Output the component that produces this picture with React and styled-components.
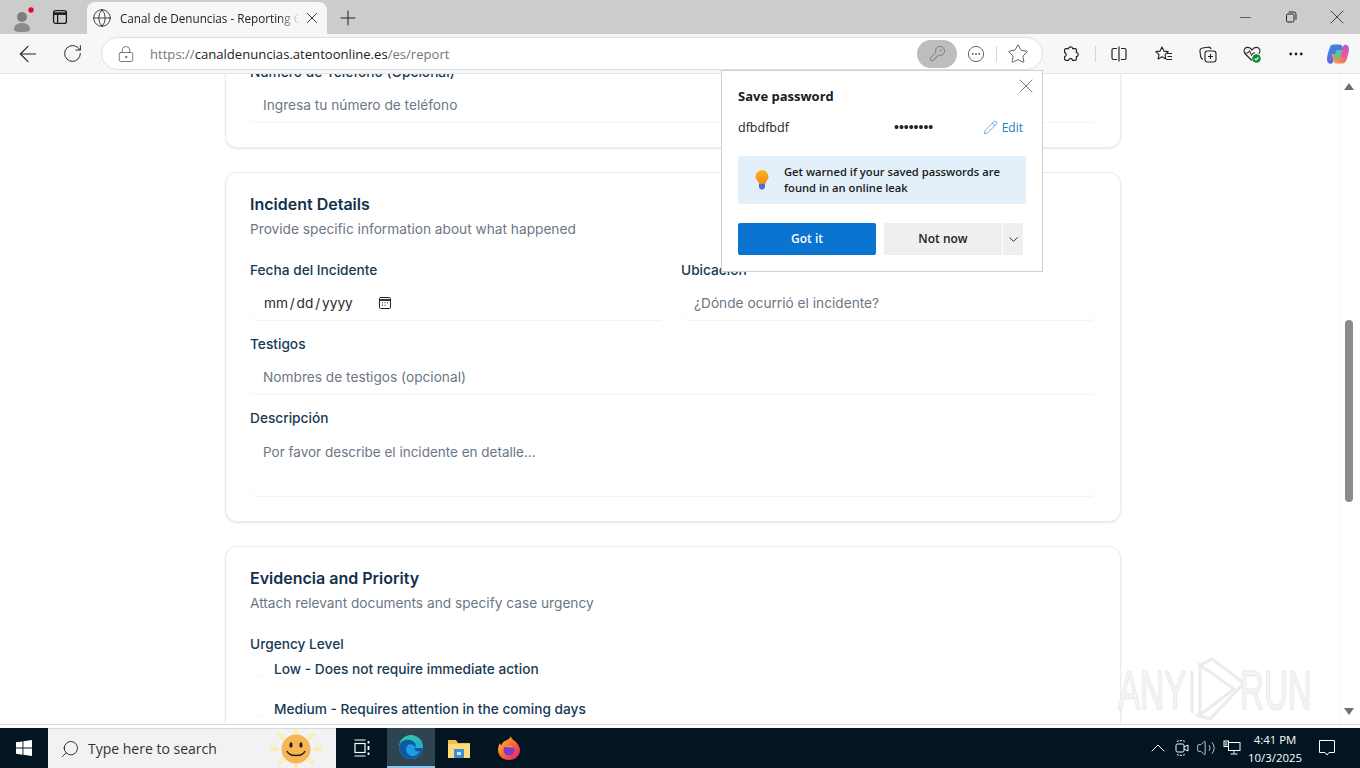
import React from 'react';
import styled, { createGlobalStyle } from 'styled-components';
import {
  ArrowLeft, RotateCw, Plus, X, Minus, Globe, Pencil, Ellipsis, Search, ChevronDown,
  ChevronUp, Star, KeyRound, LockKeyhole, Volume2,
} from 'lucide-react';

const GlobalStyle = createGlobalStyle`
  html, body { margin: 0; padding: 0; height: 100%; overflow: hidden; }
  * { box-sizing: border-box; }
  body { font-family: "Inter", "Liberation Sans", sans-serif; background: #fff; }
`;

const ProfileIcon = () => (
  <svg width="26" height="28" viewBox="0 0 26 28">
    <circle cx="10" cy="13" r="5" fill="#7d7d7d" />
    <path d="M2 26c0-5 3-7 8-7s8 2 8 7c0 1-3 2-8 2s-8-1-8-2z" fill="#8c8c8c" />
    <circle cx="19" cy="6" r="3.4" fill="#d3112b" stroke="#e6e6e6" strokeWidth="1" />
  </svg>
);

const TabsIcon = () => (
  <svg width="16" height="16" viewBox="0 0 16 16" fill="none" stroke="#1a1a1a" strokeWidth="1.3">
    <rect x="1.6" y="1.6" width="12.8" height="12.8" rx="2" />
    <path d="M1.6 4.6h12.8" strokeWidth="2.6" />
    <path d="M5.6 5v9" />
  </svg>
);

const RestoreIcon = () => (
  <svg width="12" height="12" viewBox="0 0 12 12" fill="none" stroke="#222" strokeWidth="1">
    <rect x="1.5" y="3" width="7.5" height="8" rx="1.4" />
    <path d="M3.6 1h5.2A2.2 2.2 0 0 1 11 3.2v5.4" />
  </svg>
);

const ReadIcon = () => (
  <svg width="20" height="20" viewBox="0 0 20 20" fill="none" stroke="#666" strokeWidth="1">
    <circle cx="10" cy="10" r="7.6" />
    <circle cx="6.8" cy="10" r=".9" fill="#555" stroke="none" />
    <circle cx="10" cy="10" r=".9" fill="#555" stroke="none" />
    <circle cx="13.2" cy="10" r=".9" fill="#555" stroke="none" />
  </svg>
);

const ExtensionIcon = () => (
  <svg width="18" height="18" viewBox="0 0 18 18" fill="none" stroke="#222" strokeWidth="1.2" strokeLinejoin="round">
    <path d="M7.5 2.2c1.3-.9 3-.2 3.2 1.5H13c.8 0 1.4.6 1.4 1.4v2.4c1.7.2 2.4 2 1.4 3.3-.4.5-.9.8-1.4.8v2.3c0 .8-.6 1.4-1.4 1.4h-2.5c-.2-1.8-2.5-2.4-3.5-1-.3.3-.4.7-.5 1H4c-.8 0-1.400-.6-1.400-1.400v-2.400c1.700-.3 2.200-2.500.8-3.500-.2-.2-.5-.3-.8-.4V5.100c0-.8.6-1.400 1.400-1.400h2.400c.1-.6.3-1.100.9-1.500z" />
  </svg>
);

const SplitIcon = () => (
  <svg width="18" height="18" viewBox="0 0 18 18" fill="none" stroke="#222" strokeWidth="1.2">
    <path d="M7 3.5H3.5A1.5 1.5 0 0 0 2 5v8a1.5 1.5 0 0 0 1.5 1.5H7M11 3.5h3.5A1.5 1.5 0 0 1 16 5v8a1.5 1.5 0 0 1-1.5 1.5H11M9 1.5v15" />
  </svg>
);

const FavoritesIcon = () => (
  <svg width="20" height="20" viewBox="0 0 20 20" fill="none" stroke="#222" strokeWidth="1.1" strokeLinejoin="round">
    <path d="M8 3l1.9 4.1 4.3.5-3.2 3 .9 4.4L8 12.8 4.1 15l.9-4.4-3.2-3 4.3-.5z" />
    <path d="M13 9.5h5M13.5 12.5h4.5M12.5 15.5h5.5" />
  </svg>
);

const CollectionsIcon = () => (
  <svg width="20" height="20" viewBox="0 0 20 20" fill="none" stroke="#222" strokeWidth="1.1">
    <rect x="7" y="7" width="11" height="11" rx="2.4" />
    <path d="M12.5 10v5M10 12.5h5" />
    <path d="M5 15.5C3.5 15 3 14 2.6 12.5L2 7.5C1.8 5.5 2.8 4.2 4.6 4l5.4-.8c1.5-.2 2.6.4 3.2 1.8" />
  </svg>
);

const HealthIcon = () => (
  <svg width="20" height="20" viewBox="0 0 20 20" fill="none">
    <path d="M10 16.5 3.2 10C1 7.6 2 3.6 5.4 3.4 7.4 3.3 9 4.4 10 6c1-1.6 2.6-2.7 4.6-2.6C18 3.6 19 7.6 16.8 10" stroke="#222" strokeWidth="1.1" />
    <path d="M2.5 9H6l1.5-2.5 2 5L11 9h2" stroke="#222" strokeWidth="1" />
    <circle cx="14.5" cy="14.5" r="4.3" fill="#108a3c" />
    <path d="M12.6 14.6l1.4 1.4 2.5-2.7" stroke="#fff" strokeWidth="1.2" />
  </svg>
);

const CopilotIcon = () => (
  <svg width="24" height="24" viewBox="0 0 24 24">
    <defs>
      <linearGradient id="cpA" x1="0" y1="0" x2="1" y2="1">
        <stop offset="0" stopColor="#2f8fe8" />
        <stop offset="1" stopColor="#7b4fe0" />
      </linearGradient>
      <linearGradient id="cpB" x1="0" y1="1" x2="1" y2="0">
        <stop offset="0" stopColor="#f7b52c" />
        <stop offset=".55" stopColor="#ee5a8e" />
        <stop offset="1" stopColor="#b65ae0" />
      </linearGradient>
    </defs>
    <path d="M7.5 2.5h6c1.5 0 2.5.8 3 2.2L19 12H9.5L7 20c-.4 1.2-1.3 1.8-2.5 1.8C2.5 21.8 1 20 1 17.5c0-3 1.5-9 3-12.5.7-1.7 1.800-2.500 3.500-2.500z" fill="url(#cpA)" />
    <path d="M16.5 21.5h-6c-1.5 0-2.5-.8-3-2.2L5.500 12H15l2-7.500c.4-1.200 1.300-1.800 2.500-1.800 2 0 3.500 1.800 3.500 4.300 0 3-1.500 8.500-3 11.800-.7 1.700-1.800 2.700-3.500 2.700z" fill="url(#cpB)" />
    <path d="M9 12l1.500-4h6L15 12l-1.500 4h-6z" fill="#54c8a0" />
  </svg>
);

const BulbIcon = () => (
  <BulbSvg width="16" height="22" viewBox="0 0 16 22">
    <defs>
      <linearGradient id="bulb" x1="0" y1="0" x2="0" y2="1">
        <stop offset="0" stopColor="#fbb61f" />
        <stop offset="1" stopColor="#f08a1c" />
      </linearGradient>
    </defs>
    <path d="M8 1a6.5 6.5 0 0 1 6.5 6.5c0 2.6-1.6 4-2.5 5.5-.4.7-.5 1.2-.6 2H5c-.1-.8-.3-1.3-.6-2C3.500 11.500 1.500 10.100 1.500 7.500A6.500 6.500 0 0 1 8 1z" fill="url(#bulb)" />
    <path d="M5 15h6v2.500a3 3 0 0 1-6 0z" fill="#4f6bd8" />
  </BulbSvg>
);

const CalendarIcon = () => (
  <svg width="14" height="14" viewBox="0 0 14 14" fill="none" stroke="#222" strokeWidth="1">
    <rect x="1.5" y="1.5" width="11" height="11" rx="1.2" />
    <path d="M1.5 4h11" strokeWidth="1.8" />
    <path d="M4 6.8h1M6.5 6.8h1M9 6.8h1M4 9.3h1M6.5 9.3h1" strokeWidth="1.1" />
  </svg>
);

const WindowsLogo = () => (
  <svg width="16" height="16" viewBox="0 0 16 16" fill="#fff">
    <path d="M0 2.300 6.500 1.400v6.200H0zM7.400 1.300 16 0v7.600H7.400zM0 8.500h6.500v6.200L0 13.700zM7.400 8.500H16V16l-8.600-1.200z" />
  </svg>
);

const SunFace = () => (
  <svg width="60" height="40" viewBox="0 0 60 40">
    <g stroke="#fbeeb0" strokeWidth="4">
      <path d="M30 0v5M30 35v5M4 20h8M48 20h8M12 5l6 5M48 5l-6 5M12 35l6-5M48 35l-6-5" />
    </g>
    <circle cx="30" cy="20" r="14.5" fill="#f4b753" />
    <ellipse cx="25" cy="16" rx="1.6" ry="2.8" fill="#2a1c10" />
    <ellipse cx="35" cy="16" rx="1.6" ry="2.8" fill="#2a1c10" />
    <path d="M21 22c2 6 16 6 18 0" fill="none" stroke="#2a1c10" strokeWidth="1.4" />
  </svg>
);

const TaskViewIcon = () => (
  <svg width="18" height="18" viewBox="0 0 18 18" fill="none" stroke="#fff" strokeWidth="1.2">
    <path d="M1.5 1h11M1.5 17h11" />
    <rect x="2" y="4.5" width="10" height="9" />
    <path d="M15.5 2v2.500M15.500 7v4M15.500 13.500V16" strokeWidth="1.8" />
  </svg>
);

const EdgeLogo = () => (
  <svg width="26" height="26" viewBox="0 0 26 26">
    <defs>
      <linearGradient id="edgeA" x1="0" y1="0" x2="1" y2="1">
        <stop offset="0" stopColor="#37d0a2" />
        <stop offset="1" stopColor="#1b9de2" />
      </linearGradient>
    </defs>
    <circle cx="13" cy="13" r="12" fill="url(#edgeA)" />
    <path d="M1 13C2 7 7 5 12 6c5 1 7 5 5 8h8c-1 7-7 11-12 11C6 25 1 20 1 13z" fill="#0c59a4" />
    <path d="M8 15c0-4 4-6 7-4 2 1 2 3 2 3-1 3 2 4 5 3-2 4-6 6-9 5-3-1-5-4-5-7z" fill="#1b9de2" />
  </svg>
);

const FolderLogo = () => (
  <svg width="24" height="22" viewBox="0 0 24 22">
    <path d="M1 3h8l2 3h12v15H1z" fill="#f0c24a" />
    <path d="M1 7h22v14H1z" fill="#fbdc7c" />
    <rect x="7" y="12" width="10" height="9" fill="#3f8fd6" />
    <rect x="10" y="15" width="4" height="3" fill="#cfe6f8" />
  </svg>
);

const FirefoxLogo = () => (
  <svg width="24" height="26" viewBox="0 0 24 26">
    <defs>
      <linearGradient id="ffA" x1="0" y1="0" x2="1" y2="1">
        <stop offset="0" stopColor="#ffcb2e" />
        <stop offset=".5" stopColor="#ff6a2b" />
        <stop offset="1" stopColor="#e31587" />
      </linearGradient>
    </defs>
    <path d="M14 1c0 3 3 4 5 6 3 3 4 6 4 8 0 6-5 10-11 10S1 21 1 15c0-3 1-5 2-7 0 1 1 2 2 2 0-3 3-4 5-5 2-1 3-2 4-4z" fill="url(#ffA)" />
    <circle cx="12" cy="15" r="5.5" fill="#7c3bd0" />
    <path d="M6 12c3-3 9-3 11 1-2-1-4 0-6-1-2 0-3 0-5 0z" fill="#ff8a2b" />
  </svg>
);

const MeetIcon = () => (
  <svg width="16" height="18" viewBox="0 0 16 18" fill="none" stroke="#fff" strokeWidth="1">
    <rect x="2" y="5" width="8" height="8" rx="1.5" />
    <path d="M10 8l4-2v6l-4-2" />
    <path d="M3 2.5c2-1.2 6-1.2 8 0M3 15.5c2 1.2 6 1.2 8 0" strokeDasharray="2 1" />
  </svg>
);

const NetworkIcon = () => (
  <svg width="18" height="16" viewBox="0 0 18 16" fill="none" stroke="#fff" strokeWidth="1">
    <rect x="5.5" y="2.5" width="11.5" height="8" />
    <path d="M11 10.5v3M7.5 14h7" />
    <rect x="1" y="1" width="4.5" height="5.5" fill="#001522" />
    <path d="M2 3h2.5M2 4.8h2.5" />
  </svg>
);

const ChatIcon = () => (
  <svg width="16" height="16" viewBox="0 0 16 16" fill="none" stroke="#fff" strokeWidth="1">
    <path d="M.5.5h15v12H10l-2 2.500-2-2.500H.5z" />
  </svg>
);

const Watermark = () => (
  <WatermarkWrap aria-hidden>
    <WatermarkText $width={72}><span>ANY</span></WatermarkText>
    <svg width="56" height="65" viewBox="0 0 56 65" fill="none" stroke="#ececec" strokeWidth="3">
      <path d="M2 14v42M10 8v50l34-26z" />
      <path d="M10 8l12-6 32 24-34 36-14-4" />
    </svg>
    <WatermarkText $width={72} $pull={6}><span>RUN</span></WatermarkText>
  </WatermarkWrap>
);

export default function App() {
  return (
    <>
      <GlobalStyle />
      <Screen>
        <TabStrip>
          <Profile><ProfileIcon /></Profile>
          <StripButton><TabsIcon /></StripButton>
          <Tab>
            <Globe size={20} strokeWidth={1} color="#222" />
            <TabTitle>Canal de Denuncias - Reporting Channel</TabTitle>
            <X size={18} strokeWidth={1.2} color="#222" />
          </Tab>
          <NewTab><Plus size={24} strokeWidth={1} color="#222" /></NewTab>
          <WindowControls>
            <WindowButton><Minus size={17} strokeWidth={0.9} color="#222" /></WindowButton>
            <WindowButton><RestoreIcon /></WindowButton>
            <WindowButton><X size={24} strokeWidth={0.8} color="#222" /></WindowButton>
          </WindowControls>
        </TabStrip>

        <Toolbar>
          <NavButton><ArrowLeft size={26} strokeWidth={1} color="#222" /></NavButton>
          <NavButton><RotateCw size={21} strokeWidth={1.1} color="#222" /></NavButton>
          <AddressBar>
            <LockKeyhole size={18} strokeWidth={1} color="#555" />
            <Url>
              <span>https://</span><strong>canaldenuncias.atentoonline.es</strong><span>/es/report</span>
            </Url>
            <KeyPill><KeyRound size={17} strokeWidth={1.1} color="#6b6b6b" /></KeyPill>
            <AddressIcon><ReadIcon /></AddressIcon>
            <AddressDivider />
            <AddressIcon><Star size={22} strokeWidth={0.9} color="#444" /></AddressIcon>
          </AddressBar>
          <ToolIcons>
            <ToolIcon $width={48}><ExtensionIcon /></ToolIcon>
            <ToolDivider />
            <ToolIcon $width={46}><SplitIcon /></ToolIcon>
            <ToolIcon><FavoritesIcon /></ToolIcon>
            <ToolIcon><CollectionsIcon /></ToolIcon>
            <ToolIcon><HealthIcon /></ToolIcon>
            <ToolIcon><Ellipsis size={18} strokeWidth={1.8} color="#222" /></ToolIcon>
            <ToolIcon $width={40}><CopilotIcon /></ToolIcon>
          </ToolIcons>
        </Toolbar>

        <Page>
          <Content>
            <Stack>
              <Card>
                <Field>
                  <Label>Número de Teléfono (Opcional)</Label>
                  <Input placeholder="Ingresa tu número de teléfono" readOnly />
                </Field>
              </Card>

              <Card>
                <CardHead>
                  <CardTitle>Incident Details</CardTitle>
                  <CardDesc>Provide specific information about what happened</CardDesc>
                </CardHead>
                <Fields>
                  <FieldRow>
                    <Field>
                      <Label>Fecha del Incidente</Label>
                      <DateBox>
                        <span>mm / dd / yyyy</span>
                        <CalendarIcon />
                      </DateBox>
                    </Field>
                    <Field>
                      <Label>Ubicación</Label>
                      <Input placeholder="¿Dónde ocurrió el incidente?" readOnly />
                    </Field>
                  </FieldRow>
                  <Field>
                    <Label>Testigos</Label>
                    <Input placeholder="Nombres de testigos (opcional)" readOnly />
                  </Field>
                  <Field>
                    <Label>Descripción</Label>
                    <TextArea placeholder="Por favor describe el incidente en detalle..." readOnly />
                  </Field>
                </Fields>
              </Card>

              <Card>
                <CardHead>
                  <CardTitle>Evidencia and Priority</CardTitle>
                  <CardDesc>Attach relevant documents and specify case urgency</CardDesc>
                </CardHead>
                <Fields>
                  <Field>
                    <Label>Urgency Level</Label>
                    <RadioList>
                      <RadioRow><RadioDot /><RadioText>Low - Does not require immediate action</RadioText></RadioRow>
                      <RadioRow><RadioDot /><RadioText>Medium - Requires attention in the coming days</RadioText></RadioRow>
                      <RadioRow><RadioDot /><RadioText>High - Requires urgent attention</RadioText></RadioRow>
                    </RadioList>
                  </Field>
                </Fields>
              </Card>
            </Stack>
            <Watermark />
          </Content>
          <Scrollbar>
            <ScrollArrow />
            <ScrollTrack><ScrollThumb /></ScrollTrack>
            <ScrollArrow $down />
          </Scrollbar>
        </Page>

        <Taskbar>
          <StartButton><WindowsLogo /></StartButton>
          <SearchBox>
            <FlippedSearch size={20} strokeWidth={1} color="#111" />
            <SearchText>Type here to search</SearchText>
            <SunFace />
          </SearchBox>
          <TaskButton $width={51}><TaskViewIcon /></TaskButton>
          <TaskButton $active><EdgeLogo /></TaskButton>
          <TaskButton><FolderLogo /></TaskButton>
          <TaskButton $width={52}><FirefoxLogo /></TaskButton>
          <Tray>
            <TrayIcon><ChevronUp size={24} strokeWidth={1} color="#fff" /></TrayIcon>
            <TrayIcon><MeetIcon /></TrayIcon>
            <TrayIcon><Volume2 size={20} strokeWidth={0.9} color="#fff" /></TrayIcon>
            <TrayIcon $gap={2}><NetworkIcon /></TrayIcon>
            <Clock>
              <span>4:41 PM</span>
              <span>10/3/2025</span>
            </Clock>
            <Notify><ChatIcon /></Notify>
          </Tray>
        </Taskbar>

        <Popup>
          <PopupClose><X size={24} strokeWidth={0.7} color="#444" /></PopupClose>
          <PopupTitle>Save password</PopupTitle>
          <CredRow>
            <CredUser>dfbdfbdf</CredUser>
            <CredDots>••••••••</CredDots>
            <EditLink><Pencil size={15} strokeWidth={1} />Edit</EditLink>
          </CredRow>
          <LeakNote>
            <BulbIcon />
            <LeakText>Get warned if your saved passwords are found in an online leak</LeakText>
          </LeakNote>
          <PopupActions>
            <PrimaryButton>Got it</PrimaryButton>
            <SplitButton>
              <SecondaryButton>Not now</SecondaryButton>
              <CaretButton><ChevronDown size={15} strokeWidth={1.6} color="#333" /></CaretButton>
            </SplitButton>
          </PopupActions>
        </Popup>
      </Screen>
    </>
  );
}

const Screen = styled.div`
  position: relative;
  width: 1360px;
  height: 768px;
  display: flex;
  flex-direction: column;
  overflow: hidden;
`;

const TabStrip = styled.div`
  height: 34px;
  flex: none;
  display: flex;
  align-items: flex-end;
  background: #cccccc;
`;

const Profile = styled.div`
  width: 38px;
  height: 32px;
  margin-left: 6px;
  display: flex;
  align-items: center;
  justify-content: center;
`;

const StripButton = styled.div`
  width: 32px;
  height: 32px;
  margin-bottom: 1px;
  display: flex;
  align-items: center;
  justify-content: center;
`;

const Tab = styled.div`
  width: 240px;
  height: 32px;
  margin-left: 11px;
  padding: 0 6px 0 5px;
  display: flex;
  align-items: center;
  gap: 8px;
  background: #f7f7f7;
  border-radius: 8px 8px 0 0;

  svg {
    flex: none;
  }
`;

const TabTitle = styled.span`
  flex: 1;
  margin-right: -5px;
  overflow: hidden;
  white-space: nowrap;
  font: 11.7px "Open Sans", "Liberation Sans", sans-serif;
  color: #222;
  mask-image: linear-gradient(to right, #000 88%, transparent);
`;

const NewTab = styled.div`
  width: 42px;
  height: 32px;
  display: flex;
  align-items: center;
  justify-content: center;
`;

const WindowControls = styled.div`
  margin-left: auto;
  height: 34px;
  display: flex;
`;

const WindowButton = styled.div`
  width: 46px;
  display: flex;
  align-items: center;
  justify-content: center;
`;

const Toolbar = styled.div`
  height: 40px;
  flex: none;
  display: flex;
  align-items: center;
  padding-left: 6px;
  background: #f7f7f7;
  border-bottom: 1px solid #e4e4e4;
`;

const NavButton = styled.div`
  width: 44px;
  height: 32px;
  display: flex;
  align-items: center;
  justify-content: center;
`;

const AddressBar = styled.div`
  width: 942px;
  height: 33px;
  margin-left: 7px;
  padding: 0 5px 0 15px;
  display: flex;
  align-items: center;
  background: #fff;
  border: 1px solid #dedede;
  border-radius: 17px;

  > svg {
    flex: none;
  }
`;

const Url = styled.div`
  flex: 1;
  margin-left: 15px;
  font: 13.1px "Open Sans", "Liberation Sans", sans-serif;
  color: #767676;

  strong {
    font-weight: 400;
    color: #222;
  }
`;

const KeyPill = styled.div`
  width: 40px;
  height: 28px;
  display: flex;
  align-items: center;
  justify-content: center;
  background: #bdbdbd;
  border-radius: 14px;
`;

const AddressIcon = styled.div`
  width: 38px;
  display: flex;
  align-items: center;
  justify-content: center;
`;

const AddressDivider = styled.div`
  width: 1px;
  height: 16px;
  margin: 0 2px 0 1px;
  background: #d6d6d6;
`;

const ToolIcons = styled.div`
  display: flex;
  align-items: center;
  margin-left: 4px;
`;

const ToolIcon = styled.div`
  width: ${(p) => p.$width || 44}px;
  display: flex;
  align-items: center;
  justify-content: center;
`;

const ToolDivider = styled.div`
  width: 1px;
  height: 16px;
  background: #d6d6d6;
`;

const Page = styled.div`
  flex: 1;
  min-height: 0;
  display: flex;
  background: #fff;
  border-bottom: 1px solid #d8d8d8;
`;

const Content = styled.div`
  position: relative;
  flex: 1;
  overflow: hidden;
  padding-left: 225px;
`;

const Stack = styled.div`
  width: 896px;
  margin-top: -35px;
  display: flex;
  flex-direction: column;
  gap: 24px;
`;

const Card = styled.section`
  padding: 22px 24px 24px;
  background: #fff;
  border: 1px solid #ececec;
  border-radius: 12px;
  box-shadow: 0 1px 2px rgba(0, 0, 0, 0.1);
`;

const CardHead = styled.header`
  margin-bottom: 21px;
`;

const CardTitle = styled.h2`
  margin: 0 0 6px;
  font-size: 16px;
  line-height: 18px;
  font-weight: 600;
  color: #12304d;
`;

const CardDesc = styled.p`
  margin: 0;
  font-size: 13.7px;
  line-height: 20px;
  color: #6b7785;
`;

const Fields = styled.div`
  display: flex;
  flex-direction: column;
  gap: 13px;
`;

const FieldRow = styled.div`
  display: grid;
  grid-template-columns: 1fr 1fr;
  gap: 16px;
`;

const Field = styled.div`
  display: flex;
  flex-direction: column;
  gap: 5px;
`;

const Label = styled.label`
  font-size: 13.7px;
  line-height: 20px;
  font-weight: 500;
  color: #163a55;
`;

const Input = styled.input`
  width: 100%;
  height: 36px;
  padding: 0 13px;
  border: none;
  border-bottom: 1px solid #f3f3f3;
  border-radius: 6px;
  outline: none;
  background: #fff;
  font: 13.7px "Inter", "Liberation Sans", sans-serif;

  &::placeholder {
    color: #6b7785;
    opacity: 1;
  }
`;

const DateBox = styled.div`
  height: 36px;
  padding: 0 14px;
  display: flex;
  align-items: center;
  gap: 25px;
  border-bottom: 1px solid #f3f3f3;
  border-radius: 6px;
  font-size: 13.7px;
  color: #222b33;

  span {
    word-spacing: -2px;
  }
`;

const TextArea = styled.textarea`
  display: block;
  width: 100%;
  height: 64px;
  padding: 10px 13px;
  border: none;
  border-bottom: 1px solid #f3f3f3;
  border-radius: 6px;
  outline: none;
  resize: none;
  font: 13.5px/18px "Inter", "Liberation Sans", sans-serif;

  &::placeholder {
    color: #6b7785;
    opacity: 1;
  }
`;

const RadioList = styled.div`
  display: flex;
  flex-direction: column;
  gap: 20px;
`;

const RadioRow = styled.div`
  display: flex;
  align-items: center;
  gap: 8px;
  height: 20px;
`;

const RadioDot = styled.span`
  width: 16px;
  height: 16px;
  border-radius: 50%;
  border-bottom: 1px solid #f6f6f6;
`;

const RadioText = styled.span`
  font-size: 13.7px;
  font-weight: 500;
  color: #163a55;
`;

const WatermarkWrap = styled.div`
  position: absolute;
  left: 1118px;
  top: 583px;
  display: flex;
  align-items: center;
  pointer-events: none;
`;

const WatermarkText = styled.div`
  width: ${(p) => p.$width}px;
  margin-left: ${(p) => -(p.$pull || 0)}px;
  white-space: nowrap;

  span {
    display: inline-block;
    font: 56px/1 "Liberation Sans", sans-serif;
    transform: scaleX(0.59);
    transform-origin: left center;
    color: #f4f4f4;
    -webkit-text-stroke: 1px #e8e8e8;
    text-shadow: 1px 1px 3px rgba(0, 0, 0, 0.06);
  }
`;

const Scrollbar = styled.div`
  width: 20px;
  flex: none;
  display: flex;
  flex-direction: column;
  align-items: center;
  padding: 9px 4px 9px 0;
  background: #fff;
  border-left: 1px solid #f6f6f6;
`;

const ScrollArrow = styled.div`
  width: 0;
  height: 0;
  flex: none;
  border-left: 5px solid transparent;
  border-right: 5px solid transparent;
  border-bottom: ${(p) => (p.$down ? 'none' : '7px solid #707070')};
  border-top: ${(p) => (p.$down ? '7px solid #707070' : 'none')};
`;

const ScrollTrack = styled.div`
  flex: 1;
  display: flex;
  align-items: flex-start;
`;

const ScrollThumb = styled.div`
  width: 8px;
  height: 182px;
  margin-top: 230px;
  background: #8b8b8b;
  border-radius: 4px;
`;

const Taskbar = styled.div`
  height: 40px;
  flex: none;
  display: flex;
  align-items: stretch;
  margin-top: 3px;
  background: #021521;
`;

const StartButton = styled.div`
  width: 48px;
  display: flex;
  align-items: center;
  justify-content: center;
`;

const SearchBox = styled.div`
  width: 288px;
  padding: 0 10px 0 12px;
  display: flex;
  align-items: center;
  background: #f2f2f2;
  border-top: 1px solid #d8d8d8;
`;

const FlippedSearch = styled(Search)`
  transform: scaleX(-1);
`;

const SearchText = styled.span`
  flex: 1;
  margin-left: 8px;
  font: 14px "Open Sans", "Liberation Sans", sans-serif;
  color: #333;
`;

const TaskButton = styled.div`
  width: ${(p) => p.$width || 48}px;
  display: flex;
  align-items: center;
  justify-content: center;
  background: ${(p) => (p.$active ? '#2e4450' : 'transparent')};
  border-bottom: ${(p) => (p.$active ? '2px solid #86c7ee' : 'none')};
`;

const Tray = styled.div`
  margin-left: auto;
  display: flex;
  align-items: center;
  padding-right: 9px;
`;

const TrayIcon = styled.div`
  width: 24px;
  margin-left: ${(p) => p.$gap || 0}px;
  display: flex;
  align-items: center;
  justify-content: center;
`;

const Clock = styled.div`
  width: 56px;
  margin-left: 3px;
  display: flex;
  flex-direction: column;
  align-items: center;
  gap: 1px;
  white-space: nowrap;
  font: 11.4px/17px "Open Sans", "Liberation Sans", sans-serif;
  color: #fff;
`;

const Notify = styled.div`
  width: 48px;
  display: flex;
  align-items: center;
  justify-content: center;
`;

const Popup = styled.div`
  position: absolute;
  left: 721px;
  top: 70px;
  width: 322px;
  height: 202px;
  padding: 0 16px;
  background: #fff;
  border: 1px solid #d0d0d0;
  font-family: "Open Sans", "Liberation Sans", sans-serif;
`;

const PopupClose = styled.div`
  position: absolute;
  right: 4px;
  top: 3px;
  display: flex;
`;

const PopupTitle = styled.h3`
  margin: 15px 0 0;
  font-size: 13px;
  line-height: 20px;
  font-weight: 700;
  color: #1a1a1a;
`;

const CredRow = styled.div`
  margin-top: 11px;
  height: 20px;
  display: flex;
  align-items: center;
  font-size: 12.5px;
  color: #222;
`;

const CredUser = styled.span`
  width: 156px;
`;

const CredDots = styled.span`
  flex: 1;
  font: 400 14px "Liberation Sans", sans-serif;
`;

const EditLink = styled.span`
  display: flex;
  align-items: center;
  gap: 4px;
  color: #2a7ab8;
  font-size: 12px;
  margin-right: 3px;
`;

const LeakNote = styled.div`
  margin-top: 19px;
  height: 48px;
  padding: 0 16px;
  display: flex;
  align-items: center;
  gap: 14px;
  background: #e3eff9;
  border-radius: 2px;
`;

const BulbSvg = styled.svg`
  flex: none;
`;

const LeakText = styled.span`
  font-size: 11.2px;
  line-height: 16px;
  font-weight: 600;
  color: #1a1a1a;
`;

const PopupActions = styled.div`
  margin-top: 19px;
  display: flex;
  gap: 8px;
`;

const PrimaryButton = styled.div`
  width: 138px;
  height: 32px;
  padding-bottom: 1px;
  display: flex;
  align-items: center;
  justify-content: center;
  background: #0b74d1;
  border-radius: 2px;
  color: #fff;
  font-size: 12px;
  font-weight: 600;
`;

const SplitButton = styled.div`
  display: flex;
  gap: 1px;
`;

const SecondaryButton = styled.div`
  width: 118px;
  height: 32px;
  padding-bottom: 1px;
  display: flex;
  align-items: center;
  justify-content: center;
  background: #efefef;
  font-size: 12px;
  font-weight: 600;
  color: #222;
`;

const CaretButton = styled.div`
  width: 20px;
  height: 32px;
  display: flex;
  align-items: center;
  justify-content: center;
  background: #efefef;
`;
